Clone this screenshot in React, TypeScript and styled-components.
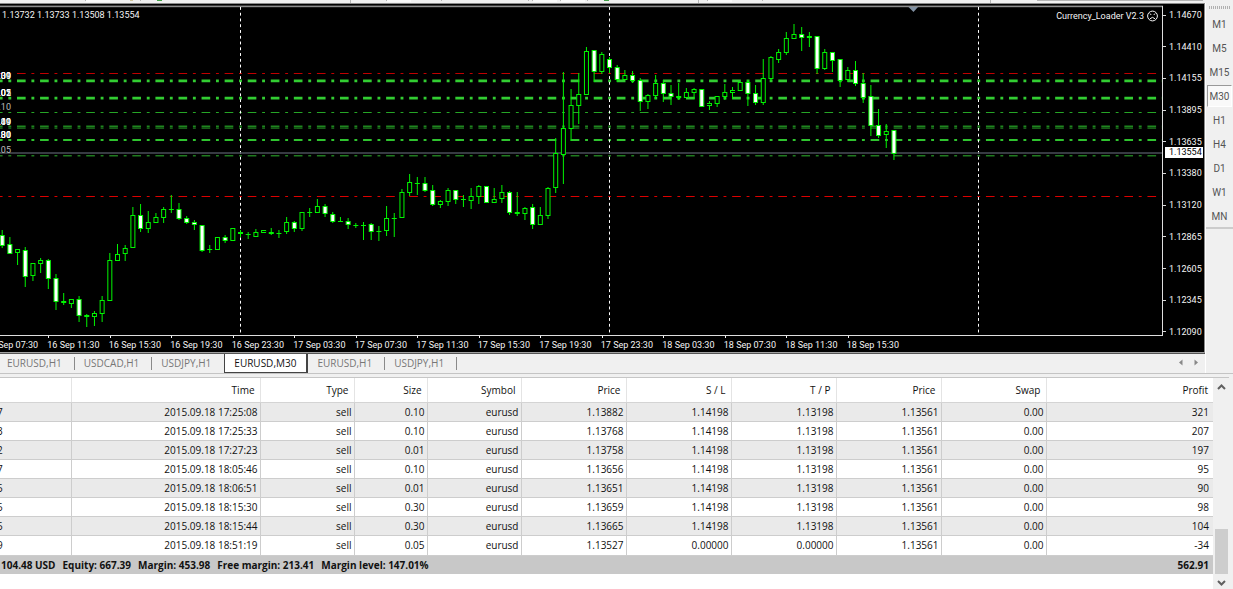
import React from "react";
import styled, { createGlobalStyle } from "styled-components";

const GlobalStyle = createGlobalStyle`
  * { box-sizing: border-box; }
  body {
    margin: 0;
    background: #f0f0f0;
    font-family: "Open Sans", "Noto Sans", sans-serif;
    font-size: 10px;
  }
  button { font: inherit; color: inherit; border: 0; padding: 0; background: none; }
`;

const TICK_FONT = `Roboto, "Liberation Sans", sans-serif`;

const Page = styled.div`
  display: flex;
  flex-direction: column;
  min-height: 100vh;
`;

const ToolbarEdge = styled.svg`
  display: block;
  width: 100%;
  height: 3px;
  background: #f0f0f0;
`;

const Upper = styled.div`
  display: flex;
  height: 371px;
  border-bottom: 1px solid #c4c4c4;
`;

const Workspace = styled.main`
  flex: 1;
  min-width: 0;
  display: flex;
  flex-direction: column;
  border-right: 1px solid #fff;
`;

const Chart = styled.section`
  position: relative;
  display: flex;
  height: 350px;
  background: #000;
  color: #f4f4f4;
  border-top: 1px solid #8a8a8a;
  border-right: 1px solid #8a8a8a;
  border-bottom: 1px solid #a0a0a0;
  font-family: ${TICK_FONT};
  font-size: 9px;
`;

const Plot = styled.svg`
  display: block;
  flex: 1;
  min-width: 0;
  height: 348px;
`;

const Caption = styled.div`
  position: absolute;
  top: 6px;
  right: 46px;
  display: flex;
  align-items: center;
  gap: 3px;
  line-height: 12px;
`;

const PriceScale = styled.div`
  position: relative;
  width: 41px;
  height: 334px;
  padding-top: 5px;
  display: flex;
  flex-direction: column;
  justify-content: space-between;
`;

const PriceMark = styled.div`
  display: flex;
  align-items: center;
  gap: 3px;
  line-height: 12px;
  &::before {
    content: "";
    width: 3px;
    height: 1px;
    background: #d8d8d8;
  }
`;

const CurrentPrice = styled.div`
  position: absolute;
  top: 143px;
  left: 2px;
  width: 38px;
  padding-left: 4px;
  line-height: 11px;
  background: #fff;
  color: #000;
`;

const TabBar = styled.nav`
  display: flex;
  align-items: flex-start;
  height: 20px;
  padding-left: 0;
  border-top: 1px solid #555;
  box-shadow: 0 -1px 0 #f4f4f4;
`;

const Tab = styled.button<{ $active?: boolean; $first?: boolean; $last?: boolean }>`
  display: flex;
  align-items: center;
  line-height: 16px;
  color: ${(p) => (p.$active ? "#111" : "#777")};
  background: ${(p) => (p.$active ? "#fff" : "transparent")};
  height: ${(p) => (p.$active ? 19 : 18)}px;
  padding: ${(p) => (p.$active ? "0 10px 0 9px" : p.$first ? "0 0 0 7px" : "0 0 0 9px")};
  border: ${(p) => (p.$active ? "1px solid #444" : "0")};
  border-top: 0;
  border-right-width: ${(p) => (p.$active ? 2 : 0)}px;
  &::after {
    content: "";
    display: ${(p) => (p.$active ? "none" : "block")};
    width: 1px;
    height: 13px;
    margin-left: 12px;
    background: ${(p) => (p.$last ? "transparent" : "#8a8a8a")};
  }
`;

const TabScroll = styled.div`
  margin-left: auto;
  display: flex;
  gap: 11px;
  padding: 5px 6px 0 0;
`;

const ArrowButton = styled.button`
  display: flex;
  svg { display: block; }
`;

const Periods = styled.aside`
  width: 27px;
  padding: 3px 1px 0;
  display: flex;
  flex-direction: column;
`;

const Grip = styled.div`
  height: 3px;
  margin: 0 2px 3px;
  background: repeating-linear-gradient(90deg, #b0b0b0 0 1px, #f0f0f0 1px 2px);
`;

const PeriodButton = styled.button<{ $active?: boolean }>`
  height: 22px;
  margin: 1px 0;
  font-family: ${TICK_FONT};
  font-size: 10px;
  color: #555;
  background: ${(p) => (p.$active ? "#f9f9f9" : "transparent")};
  border: 1px solid transparent;
  border-color: ${(p) => (p.$active ? "#999 #fff #fff #999" : "transparent")};
`;

const PeriodRule = styled.div`
  height: 2px;
  margin: -1px -1px 0;
  background: #ccc;
`;

const Terminal = styled.section`
  flex: 1;
  display: flex;
  margin: 3px 4px 0 0;
  border-top: 1px solid #c6c6c6;
  background: #fff;
`;

const TableArea = styled.div`
  flex: 1;
  min-width: 0;
`;

const Trades = styled.table`
  width: 100%;
  height: 196px;
  table-layout: fixed;
  border-collapse: collapse;
  color: #111;
`;

const Head = styled.th`
  height: 24px;
  padding: 0 5px 0 0;
  text-align: right;
  font-weight: 400;
  border-right: 1px solid #e4e4e4;
  border-bottom: 1px solid #d4d4d4;
  &:last-child { border-right: 0; }
`;

const Row = styled.tr`
  height: 19px;
  &:nth-child(odd) { background: #eaeaea; }
`;

const Cell = styled.td`
  padding: 0 2px 0 0;
  line-height: 14px;
  text-align: right;
  border-right: 1px solid #cdcdcd;
  border-bottom: 1px solid #cdcdcd;
  &:last-child { border-right: 0; padding-right: 4px; }
`;

const Ticket = styled(Cell)`
  overflow: hidden;
  text-align: left;
  text-indent: -3px;
`;

const SummaryRow = styled.tr`
  height: 19px;
  background: #c8c8c8;
  font-weight: 700;
`;

const SummaryCell = styled.td`
  padding: 0 4px 0 1px;
  line-height: 14px;
  text-align: right;
`;

const Figures = styled.div`
  display: flex;
  gap: 7px;
  white-space: nowrap;
`;

const ScrollBar = styled.div`
  width: 16px;
  padding: 0 1px 0 2px;
  background: #f0f0f0;
  display: flex;
  flex-direction: column;
  align-items: center;
  justify-content: space-between;
`;

const ScrollArrow = styled(ArrowButton)`
  padding: 6px 2px 3px;
`;

const Track = styled.div`
  flex: 1;
  align-self: stretch;
  display: flex;
  flex-direction: column;
  justify-content: flex-end;
`;

const Thumb = styled.div`
  height: 45px;
  background: #cdcdcd;
`;

/* high, body top, body bottom, low, falling (1), rising (0) */
type Candle = [number, number, number, number, 0 | 1];
const candles: Candle[] = [
  [230, 235, 245, 247, 1], [237, 244, 253, 253, 1], [249, 249, 252, 264, 0], [247, 250, 276, 286, 1],
  [263, 263, 275, 280, 0], [258, 260, 263, 272, 0], [259, 260, 278, 288, 1], [274, 278, 301, 309, 1],
  [293, 301, 302, 304, 1], [299, 299, 303, 307, 0], [296, 299, 315, 321, 1], [314, 315, 316, 326, 1],
  [311, 313, 316, 325, 0], [296, 300, 313, 321, 0], [253, 260, 300, 300, 0], [244, 254, 260, 260, 0],
  [245, 248, 253, 260, 0], [207, 215, 247, 247, 0], [204, 215, 228, 231, 1], [211, 222, 228, 232, 0],
  [213, 217, 222, 222, 0], [207, 209, 217, 222, 0], [195, 209, 209, 212, 0], [203, 209, 218, 219, 1],
  [216, 218, 222, 223, 1], [220, 222, 224, 229, 1], [225, 225, 250, 251, 1], [245, 249, 249, 252, 0],
  [237, 237, 249, 249, 0], [235, 237, 240, 242, 1], [228, 228, 240, 240, 0], [230, 232, 233, 236, 1],
  [232, 234, 234, 238, 0], [229, 232, 236, 236, 0], [230, 230, 232, 232, 0], [228, 232, 233, 234, 1],
  [230, 233, 233, 237, 0], [217, 222, 231, 233, 0], [221, 222, 228, 231, 1], [212, 212, 228, 230, 0],
  [208, 212, 212, 216, 0], [199, 206, 212, 212, 0], [204, 206, 213, 216, 1], [212, 214, 221, 222, 1],
  [217, 221, 221, 221, 0], [218, 221, 224, 228, 1], [223, 225, 225, 227, 0], [222, 225, 225, 239, 0],
  [223, 224, 231, 239, 1], [226, 231, 231, 240, 0], [206, 218, 230, 235, 0], [213, 218, 218, 236, 0],
  [189, 192, 217, 217, 0], [174, 182, 192, 195, 0], [177, 183, 183, 194, 0], [177, 183, 190, 191, 1],
  [185, 190, 204, 205, 1], [200, 201, 204, 207, 0], [188, 190, 201, 205, 0], [190, 190, 199, 203, 1],
  [195, 199, 199, 206, 0], [188, 196, 200, 208, 0], [185, 186, 196, 203, 0], [186, 186, 202, 202, 1],
  [188, 199, 202, 202, 0], [185, 192, 198, 202, 0], [191, 192, 212, 214, 1], [192, 212, 213, 215, 1],
  [207, 208, 213, 219, 0], [204, 207, 224, 228, 1], [207, 215, 224, 224, 0], [187, 188, 215, 218, 0],
  [138, 153, 187, 192, 0], [72, 128, 154, 183, 0], [89, 105, 128, 140, 0], [73, 94, 105, 123, 0],
  [47, 51, 94, 94, 0], [50, 50, 71, 81, 1], [52, 54, 71, 73, 0], [57, 59, 67, 72, 1],
  [65, 67, 79, 81, 1], [70, 75, 79, 79, 0], [71, 75, 80, 82, 1], [78, 80, 101, 110, 1],
  [94, 95, 101, 108, 0], [75, 83, 95, 98, 0], [80, 83, 93, 101, 1], [85, 93, 96, 104, 1],
  [83, 96, 97, 99, 0], [88, 92, 97, 97, 0], [88, 89, 92, 98, 0], [89, 89, 106, 106, 1],
  [101, 103, 105, 109, 0], [96, 96, 103, 106, 0], [84, 92, 96, 99, 0], [87, 90, 92, 98, 0],
  [82, 82, 90, 90, 0], [80, 82, 93, 105, 1], [85, 93, 102, 104, 1], [59, 78, 102, 104, 0],
  [56, 57, 78, 80, 0], [49, 52, 59, 62, 0], [32, 38, 52, 54, 0], [24, 34, 38, 38, 0],
  [27, 34, 37, 50, 1], [32, 36, 37, 46, 0], [36, 36, 68, 73, 1], [49, 52, 68, 69, 0],
  [52, 52, 60, 71, 1], [59, 59, 80, 86, 1], [67, 70, 79, 81, 0], [61, 70, 83, 85, 1],
  [73, 83, 97, 102, 1], [85, 96, 125, 135, 1], [109, 125, 135, 137, 1], [124, 131, 134, 147, 0],
  [130, 130, 153, 159, 1],
];

const barX = (i: number) => 2.2 + i * 7.6875;

const levels = [
  { y: 73.5, w: 1, c: "#c00000" },
  { y: 80.8, w: 2.8, c: "#32cd32" },
  { y: 98.2, w: 2.8, c: "#32cd32" },
  { y: 112.5, w: 1, c: "#26a526" },
  { y: 126.4, w: 1.6, c: "#1f861f" },
  { y: 128.2, w: 1.2, c: "#1f7a1f" },
  { y: 140, w: 2, c: "#2fc42f" },
  { y: 155.7, w: 1.6, c: "#1f7a1f" },
  { y: 196.5, w: 1, c: "#dc0000" },
];

const orderMarks: [number, string[]][] = [
  [79, [".09", ".01", ".30"]],
  [96, [".05", ".02", ".01"]],
  [110, [".10"]],
  [125, [".10", ".49", ".01"]],
  [138, [".30", ".01", ".80"]],
  [153, [".05"]],
];

const times = [
  "16 Sep 07:30", "16 Sep 11:30", "16 Sep 15:30", "16 Sep 19:30", "16 Sep 23:30",
  "17 Sep 03:30", "17 Sep 07:30", "17 Sep 11:30", "17 Sep 15:30", "17 Sep 19:30",
  "17 Sep 23:30", "18 Sep 03:30", "18 Sep 07:30", "18 Sep 11:30", "18 Sep 15:30",
];

const prices = [
  "1.14670", "1.14410", "1.14155", "1.13895", "1.13635", "1.13380",
  "1.13120", "1.12865", "1.12605", "1.12345", "1.12090",
];

const periods = ["M1", "M5", "M15", "M30", "H1", "H4", "D1", "W1", "MN"];

const tabs = ["EURUSD,H1", "USDCAD,H1", "USDJPY,H1", "EURUSD,M30", "EURUSD,H1", "USDJPY,H1"];

const columns: [string, number][] = [
  ["", 71], ["Time", 189], ["Type", 94], ["Size", 73], ["Symbol", 94], ["Price", 105],
  ["S / L", 105], ["T / P", 105], ["Price", 105], ["Swap", 105], ["Profit", 167],
];

const trade = (ticket: string, time: string, size: string, open: string, profit: string, sl = "1.14198", tp = "1.13198") =>
  [ticket, `2015.09.18 ${time}`, "sell", size, "eurusd", open, sl, tp, "1.13561", "0.00", profit];

const trades = [
  trade("7", "17:25:08", "0.10", "1.13882", "321"),
  trade("3", "17:25:33", "0.10", "1.13768", "207"),
  trade("2", "17:27:23", "0.01", "1.13758", "197"),
  trade("7", "18:05:46", "0.10", "1.13656", "95"),
  trade("5", "18:06:51", "0.01", "1.13651", "90"),
  trade("5", "18:15:30", "0.30", "1.13659", "98"),
  trade("5", "18:15:44", "0.30", "1.13665", "104"),
  trade("9", "18:51:19", "0.05", "1.13527", "-34", "0.00000", "0.00000"),
];

const figures = [
  "104.48 USD", "Equity: 667.39", "Margin: 453.98", "Free margin: 213.41", "Margin level: 147.01%",
];

function CandleShape({ x, candle }: { x: number; candle: Candle }) {
  const [high, top, bottom, low, falling] = candle;
  const flat = bottom - top < 2;
  return (
    <g stroke="#00f400" strokeWidth={1}>
      <line x1={x} x2={x} y1={high} y2={low + 1} />
      {flat ? (
        <rect x={x - 2.5} y={top} width={5} height={bottom - top + 1} fill="#00f400" stroke="none" />
      ) : (
        <rect x={x - 2} y={top + 0.5} width={4} height={bottom - top} fill={falling ? "#fff" : "#000"} />
      )}
    </g>
  );
}

function PriceChart() {
  return (
    <Plot role="img" aria-label="EURUSD M30 candlestick chart">
      <g transform="translate(0,-4)">
        <rect x="0" y="5.6" width="100%" height="1.6" fill="#8c8c8c" />
        {levels.map((l) => (
          <line key={l.y} x1="0" x2="100%" y1={l.y} y2={l.y} stroke={l.c} strokeWidth={l.w}
            strokeDasharray="8.65 5.77 2.88 5.77" strokeDashoffset="6.07" />
        ))}
        {[31, 79, 127].map((i) => (
          <line key={i} x1={Math.floor(barX(i)) + 0.5} x2={Math.floor(barX(i)) + 0.5} y1="7" y2="334"
            stroke="#fff" strokeDasharray="2.88 2.88" />
        ))}
        <line x1="0" x2="100%" y1="153" y2="153" stroke="#4a4e58" strokeWidth="1.6" />
        {candles.map((c, i) => <CandleShape key={i} x={barX(i)} candle={c} />)}
        <path d="M908.500 7h9.500l-4.500 5z" fill="#8090a2" />
        <rect x="0" y="335" width="100%" height="1" fill="#dedede" />
        <svg x="100%" y="0" width="1" height="336" overflow="visible">
          <rect x="-1" y="6" width="1" height="330" fill="#dedede" />
        </svg>
        <g fill="#f4f4f4">
          <text x="2" y="18">1.13732 1.13733 1.13508 1.13554</text>
          {orderMarks.map(([y, marks]) =>
            marks.map((m) => (
              <text key={y + m} x="11" y={y} textAnchor="end" fill={marks.length > 1 ? "#fff" : "#bbb"}>{m}</text>
            ))
          )}
          {times.map((t, k) => (
            <g key={t}>
              <rect x={Math.round(barX(8 * k - 2))} y="336" width="1" height="2" />
              <text x={barX(8 * k - 2) - 1} y="348">{t}</text>
            </g>
          ))}
        </g>
      </g>
    </Plot>
  );
}

export default function App() {
  return (
    <>
      <GlobalStyle />
      <Page>
        <ToolbarEdge aria-hidden="true">
          <g fill="#fafafa">
            <rect x="86" width="24" height="2" /><rect x="387" width="24" height="2" />
            <rect x="533" width="24" height="2" /><rect x="561" width="24" height="2" />
            <rect x="708" width="24" height="2" />
          </g>
          <g fill="#b4b4b4">
            {[85, 140, 386, 441, 528, 532, 560, 587, 707, 762].map((x) => <rect key={x} x={x} width="1" height="1" />)}
            {[350, 698, 990].map((x) => <rect key={x} x={x} width="1" height="3" />)}
            <rect x="1037" width="166" height="1" />
          </g>
          <rect x="130" width="3" height="1" fill="#cfc49a" />
          <rect x="157" width="5" height="1" fill="#43a047" />
          <rect x="604" width="5" height="1" fill="#43a047" />
        </ToolbarEdge>
        <Upper>
          <Workspace>
            <Chart>
              <PriceChart />
              <Caption>
                <span>Currency_Loader V2.3</span>
                <svg width="11" height="12" viewBox="0 0 11 12" fill="none" stroke="#f4f4f4">
                  <circle cx="5.500" cy="6" r="4.900" />
                  <path d="M3 8.800Q5.500 5.900 8 8.800" />
                  <path d="M3 3.500l1.200 1.500M8 3.500L6.800 5" />
                </svg>
              </Caption>
              <PriceScale>
                {prices.map((p) => <PriceMark key={p}>{p}</PriceMark>)}
                <CurrentPrice>1.13554</CurrentPrice>
              </PriceScale>
            </Chart>
            <TabBar>
              {tabs.map((t, i) => (
                <Tab key={i} $active={i === 3} $first={i === 0}
                  $last={i === 2}>{t}</Tab>
              ))}
              <TabScroll>
                <ArrowButton aria-label="Scroll tabs left">
                  <svg width="5" height="7"><path d="M4.500 0.500v6L1 3.500z" fill="#888" /></svg>
                </ArrowButton>
                <ArrowButton aria-label="Scroll tabs right">
                  <svg width="5" height="7"><path d="M0.500 0.500v6L4 3.500z" fill="#888" /></svg>
                </ArrowButton>
              </TabScroll>
            </TabBar>
          </Workspace>
          <Periods>
            <Grip />
            {periods.map((p) => <PeriodButton key={p} $active={p === "M30"}>{p}</PeriodButton>)}
            <PeriodRule />
          </Periods>
        </Upper>
        <Terminal>
          <TableArea>
            <Trades>
              <colgroup>{columns.map(([, w], i) => <col key={i} style={{ width: w }} />)}</colgroup>
              <thead>
                <tr>{columns.map(([name], i) => <Head key={i} scope="col">{name}</Head>)}</tr>
              </thead>
              <tbody>
                {trades.map((t) => (
                  <Row key={t[1]}>
                    {t.map((v, i) => (i === 0 ? <Ticket key={i}>{v}</Ticket> : <Cell key={i}>{v}</Cell>))}
                  </Row>
                ))}
              </tbody>
              <tfoot>
                <SummaryRow>
                  <SummaryCell colSpan={10}>
                    <Figures>{figures.map((f) => <span key={f}>{f}</span>)}</Figures>
                  </SummaryCell>
                  <SummaryCell>562.91</SummaryCell>
                </SummaryRow>
              </tfoot>
            </Trades>
          </TableArea>
          <ScrollBar>
            <ScrollArrow aria-label="Scroll up">
              <svg width="9" height="6" fill="none" stroke="#606060" strokeWidth="2"><path d="M1 5l3.500-3.500L8 5" /></svg>
            </ScrollArrow>
            <Track><Thumb /></Track>
            <ScrollArrow aria-label="Scroll down">
              <svg width="9" height="6" fill="none" stroke="#606060" strokeWidth="2"><path d="M1 1l3.500 3.500L8 1" /></svg>
            </ScrollArrow>
          </ScrollBar>
        </Terminal>
      </Page>
    </>
  );
}
